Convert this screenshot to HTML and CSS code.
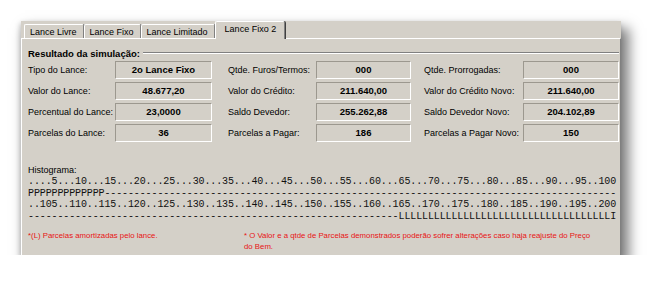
FILE: index.html
```html
<!DOCTYPE html>
<html lang="pt-BR">
<head>
  <meta charset="UTF-8">
  <title>Simulação de Lance</title>
  <link rel="stylesheet" href="styles.css">
</head>
<body>
  <div class="window">
    <div class="tabs">
      <div class="tab">Lance Livre</div>
      <div class="tab">Lance Fixo</div>
      <div class="tab">Lance Limitado</div>
      <div class="tab active">Lance Fixo 2</div>
    </div>
    <div class="page">
      <div class="section-title">Resultado da simulação:</div>

      <div class="fields">
        <div class="label">Tipo do Lance:</div>
        <div class="value">2o Lance Fixo</div>
        <div class="label col2">Qtde. Furos/Termos:</div>
        <div class="value">000</div>
        <div class="label col3">Qtde. Prorrogadas:</div>
        <div class="value">000</div>

        <div class="label">Valor do Lance:</div>
        <div class="value">48.677,20</div>
        <div class="label col2">Valor do Crédito:</div>
        <div class="value">211.640,00</div>
        <div class="label col3">Valor do Crédito Novo:</div>
        <div class="value">211.640,00</div>

        <div class="label">Percentual do Lance:</div>
        <div class="value">23,0000</div>
        <div class="label col2">Saldo Devedor:</div>
        <div class="value">255.262,88</div>
        <div class="label col3">Saldo Devedor Novo:</div>
        <div class="value">204.102,89</div>

        <div class="label">Parcelas do Lance:</div>
        <div class="value">36</div>
        <div class="label col2">Parcelas a Pagar:</div>
        <div class="value">186</div>
        <div class="label col3">Parcelas a Pagar Novo:</div>
        <div class="value">150</div>
      </div>

      <div class="histo-title">Histograma:</div>
      <pre class="histo">....5...10...15...20...25...30...35...40...45...50...55...60...65...70...75...80...85...90...95..100
PPPPPPPPPPPPP---------------------------------------------------------------------------------------
..105..110..115..120..125..130..135..140..145..150..155..160..165..170..175..180..185..190..195..200
---------------------------------------------------------------LLLLLLLLLLLLLLLLLLLLLLLLLLLLLLLLLLLLI</pre>

      <div class="notes">
        <div class="note first">*(L) Parcelas amortizadas pelo lance.</div>
        <div class="note">* O Valor e a qtde de Parcelas demonstrados poderão sofrer alterações caso haja reajuste do Preço<br>do Bem.</div>
      </div>
    </div>
  </div>
</body>
</html>
```

FILE: styles.css
```css
body {
  margin: 0;
  background: #fff;
  font-family: "Liberation Sans", Arial, sans-serif;
  color: #000;
}

/* dialog panel */
.window {
  margin: 21px 0 0 21px;
  width: 600px;
  height: 234px;
  background: #d4d0c8;
  box-shadow: 6px 9px 12px 2px rgba(0, 0, 0, 0.5), -1px 2px 5px rgba(0, 0, 0, 0.18);
  display: flex;
  flex-direction: column;
}

/* tab strip */
.tabs {
  display: flex;
  align-items: flex-end;
  height: 17px;
  padding-left: 3px;
}
.tab {
  height: 13px;
  padding: 0 6px 0 5px;
  font-size: 9px;
  line-height: 14px;
  border-top: 1px solid #fff;
  border-left: 1px solid #fff;
  border-right: 1px solid #808080;
  border-radius: 2px 2px 0 0;
  box-shadow: 1px 0 0 #404040;
  white-space: nowrap;
}
.tab.active {
  height: 17px;
  margin-bottom: -1px;
  padding: 0 8px 0 9px;
  line-height: 15px;
  background: #d4d0c8;
  position: relative;
  z-index: 1;
}

/* tab page */
.page {
  flex: 1;
  border-top: 1px solid #fff;
  border-left: 1px solid #fff;
  border-right: 1px solid #808080;
  padding: 0 1px 0 6px;
}

.section-title {
  display: flex;
  align-items: center;
  gap: 3px;
  margin-top: 8px;
  height: 12px;
  font-size: 9.5px;
  font-weight: bold;
  white-space: nowrap;
}
.section-title::after {
  content: "";
  flex: 1;
  border-top: 1px solid #808080;
  border-bottom: 1px solid #fff;
}

/* result fields */
.fields {
  display: grid;
  grid-template-columns: 87px 97px 104px 95px 112px 96px;
  grid-auto-rows: 18px;
  row-gap: 3px;
  margin-top: 2px;
}
.label {
  font-size: 9px;
  line-height: 18px;
  white-space: nowrap;
}
.label.col2 {
  padding-left: 16px;
}
.label.col3 {
  padding-left: 13px;
}
.value {
  border: 1px solid;
  border-color: #9c988f #fff #fff #9c988f;
  text-align: center;
  font-size: 9.5px;
  font-weight: bold;
  line-height: 15px;
}

/* histogram */
.histo-title {
  margin-top: 23px;
  font-size: 9px;
  line-height: 11px;
}
.histo {
  margin: 0;
  font-family: "Liberation Mono", "Courier New", monospace;
  font-size: 10px;
  letter-spacing: -0.12px;
  line-height: 11.5px;
  color: #111;
}

/* footnotes */
.notes {
  display: flex;
  margin-top: 8px;
}
.note {
  font-size: 7.8px;
  line-height: 11px;
  color: #e81414;
  white-space: nowrap;
}
.note.first {
  width: 216px;
}
```
